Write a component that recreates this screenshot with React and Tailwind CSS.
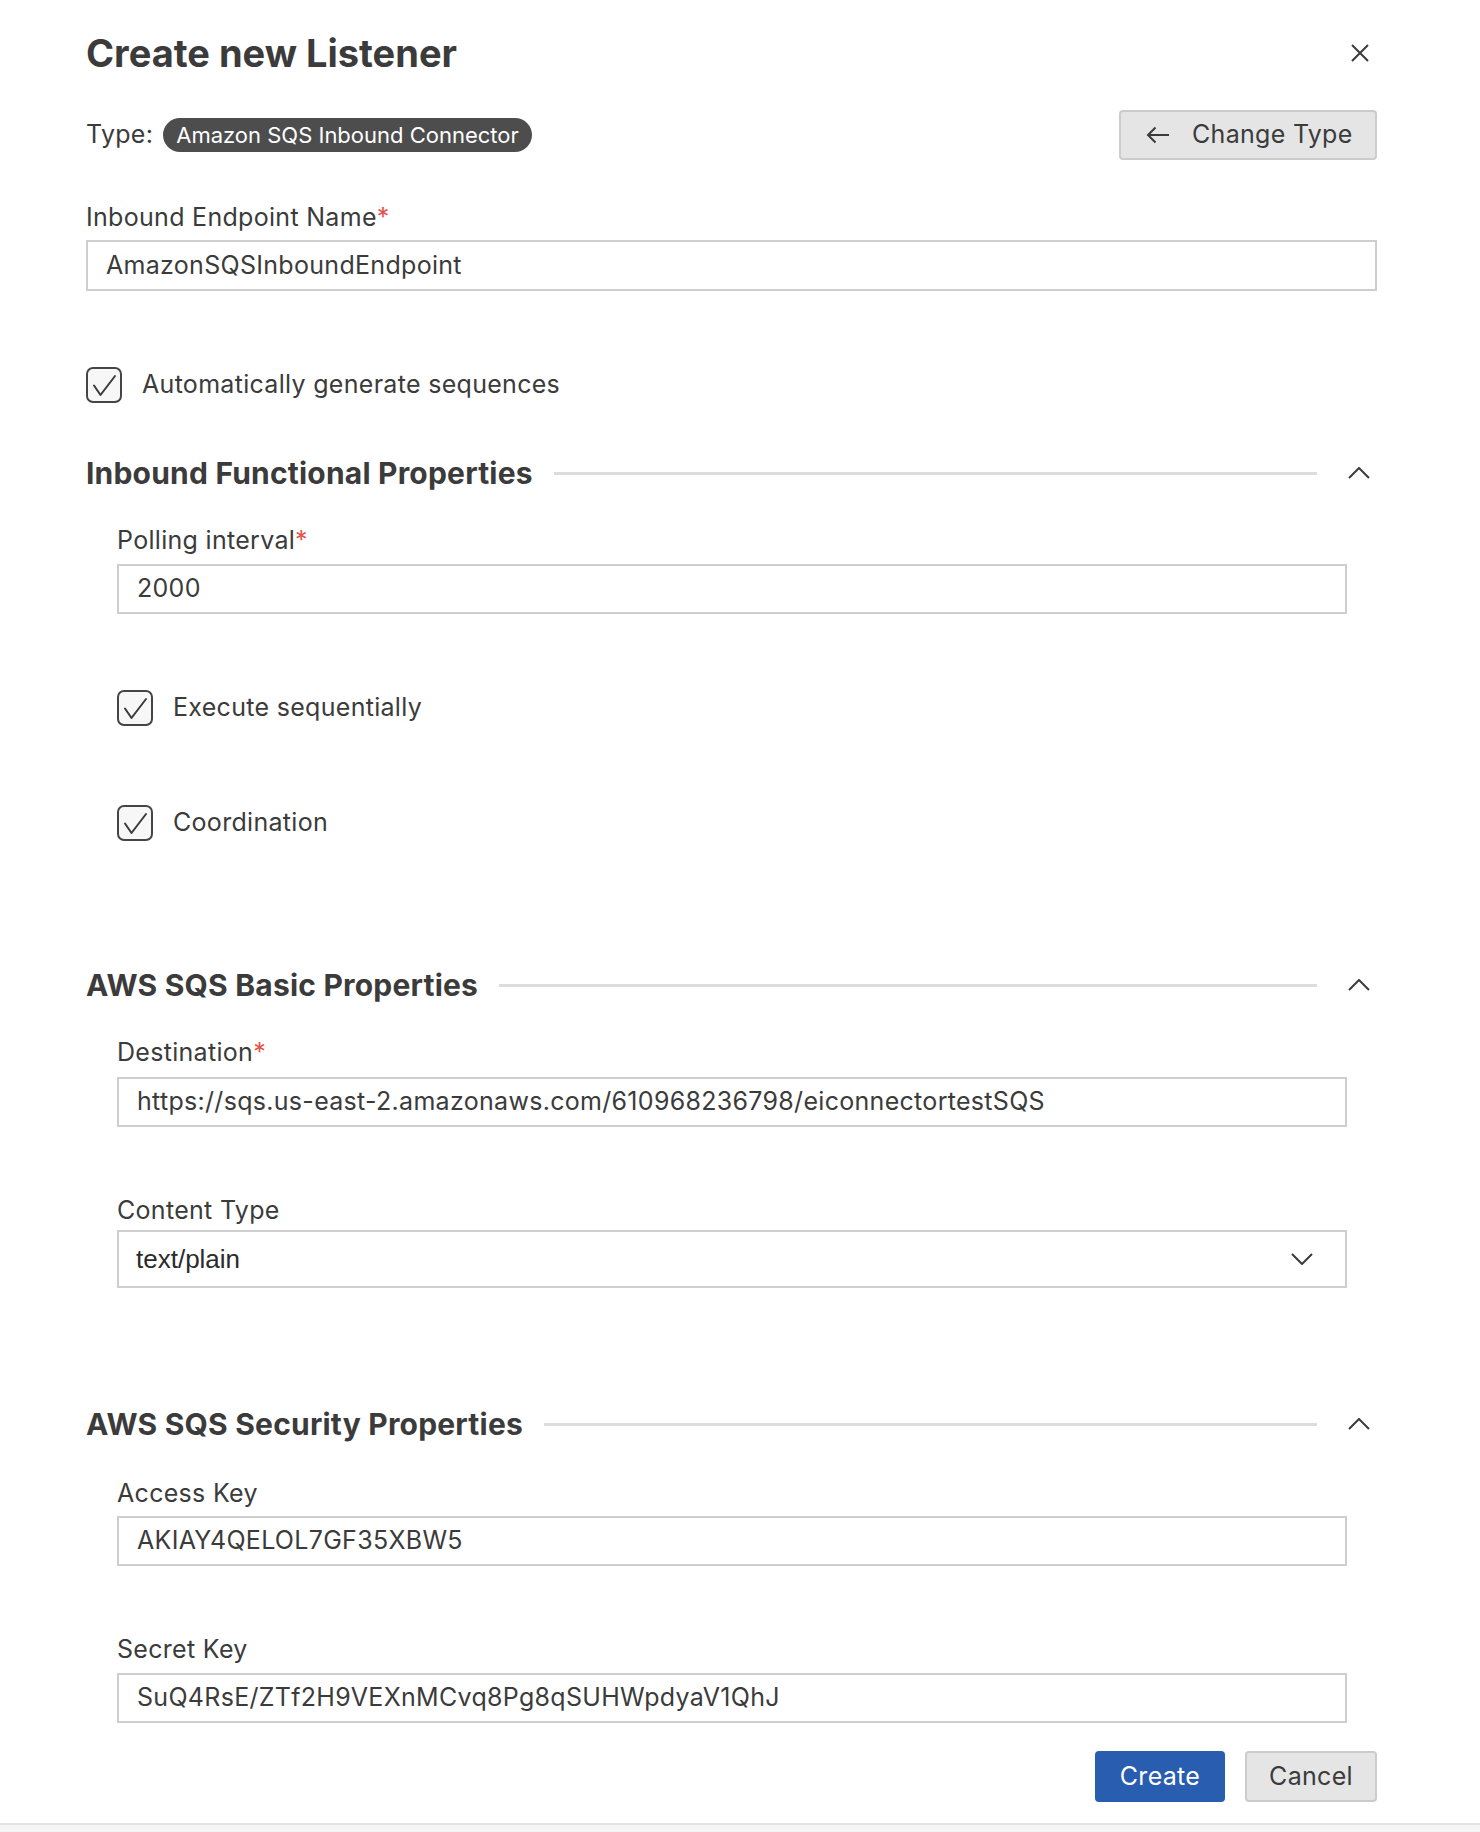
import React from "react";

function CheckIcon() {
  return (
    <svg width="36" height="36" viewBox="0 0 36 36" fill="none">
      <rect x="1" y="1" width="34" height="34" rx="6" fill="#f7f7f7" stroke="#454545" strokeWidth="2" />
      <path d="M8 18.5 L14.5 28 L29 9" stroke="#3b3b3b" strokeWidth="2" strokeLinecap="round" strokeLinejoin="round" />
    </svg>
  );
}

function ChevronUp() {
  return (
    <svg width="22" height="12" viewBox="0 0 22 12" fill="none">
      <path d="M1 11 L11 1 L21 11" stroke="#3b3b3b" strokeWidth="2" />
    </svg>
  );
}

function Label({ text, required, className = "" }) {
  return (
    <div className={`text-[25px] tracking-[0.3px] leading-[30px] text-[#3b3b3b] ${className}`}>
      {text}
      {required && <span className="text-[#e5534b]">*</span>}
    </div>
  );
}

function Field({ value, className = "" }) {
  return (
    <div className={`h-[50px] border-2 border-[#cecece] bg-white pl-[18px] flex items-center text-[25px] tracking-[0.3px] text-[#3b3b3b] ${className}`}>
      {value}
    </div>
  );
}

function Checkbox({ label, className = "" }) {
  return (
    <div className={`flex items-center gap-[20px] h-[36px] ${className}`}>
      <CheckIcon />
      <span className="text-[25px] tracking-[0.3px] text-[#3b3b3b]">{label}</span>
    </div>
  );
}

function SectionHeader({ title, className = "" }) {
  return (
    <div className={`flex items-center h-[34px] ${className}`}>
      <h2 className="text-[30px] tracking-[0.2px] font-bold text-[#3b3b3b] whitespace-nowrap">{title}</h2>
      <div className="flex-1 h-[3px] bg-[#dcdcdc] ml-[21px] mr-[24px]" />
      <div className="w-[36px] flex justify-center">
        <ChevronUp />
      </div>
    </div>
  );
}

export default function App() {
  return (
    <div className="min-h-[1832px] flex flex-col bg-white font-['Inter','Noto_Sans',sans-serif]">
      <div className="flex-1 pl-[86px] pr-[103px] pt-[31px]">
        {/* Header */}
        <div className="flex items-center justify-between h-[44px]">
          <h1 className="text-[38px] leading-[44px] font-bold text-[#3b3b3b]">Create new Listener</h1>
          <svg width="18" height="18" viewBox="0 0 18 18" className="mr-[8px]">
            <path d="M1 1 L17 17 M17 1 L1 17" stroke="#3b3b3b" strokeWidth="2" />
          </svg>
        </div>

        {/* Type row */}
        <div className="flex items-center justify-between mt-[35px] h-[50px]">
          <div className="flex items-center gap-[10px]">
            <span className="text-[25px] tracking-[0.3px] text-[#3b3b3b]">Type:</span>
            <span className="h-[34px] px-[13px] rounded-full bg-[#4d4d4d] text-white text-[22px] flex items-center">
              Amazon SQS Inbound Connector
            </span>
          </div>
          <button className="w-[258px] h-[50px] bg-[#e5e5e5] border-2 border-[#cccccc] rounded-[4px] flex items-center pl-[25px] gap-[22px] text-[25px] tracking-[0.3px] text-[#3b3b3b]">
            <svg width="24" height="18" viewBox="0 0 24 18" fill="none">
              <path d="M23 9 H2 M9.5 1.5 L2 9 L9.5 16.5" stroke="#3b3b3b" strokeWidth="2" />
            </svg>
            Change Type
          </button>
        </div>

        <Label text="Inbound Endpoint Name" required className="mt-[42px]" />
        <Field value="AmazonSQSInboundEndpoint" className="mt-[8px] h-[51px]" />

        <Checkbox label="Automatically generate sequences" className="mt-[76px]" />

        {/* Inbound Functional Properties */}
        <SectionHeader title="Inbound Functional Properties" className="mt-[53px]" />
        <div className="pl-[31px] pr-[30px]">
          <Label text="Polling interval" required className="mt-[35px]" />
          <Field value="2000" className="mt-[9px]" />
          <Checkbox label="Execute sequentially" className="mt-[76px]" />
          <Checkbox label="Coordination" className="mt-[79px]" />
        </div>

        {/* AWS SQS Basic Properties */}
        <SectionHeader title="AWS SQS Basic Properties" className="mt-[127px]" />
        <div className="pl-[31px] pr-[30px]">
          <Label text="Destination" required className="mt-[35px]" />
          <Field value="https://sqs.us-east-2.amazonaws.com/610968236798/eiconnectortestSQS" className="mt-[10px]" />
          <Label text="Content Type" className="mt-[68px]" />
          <div className="mt-[5px] h-[58px] border-2 border-[#cecece] bg-white pl-[17px] pr-[32px] flex items-center justify-between">
            <span className="text-[26px] text-[#2b2b2b] font-['Liberation_Sans',Arial,sans-serif]">text/plain</span>
            <svg width="22" height="12" viewBox="0 0 22 12" fill="none">
              <path d="M1 1 L11 11 L21 1" stroke="#3b3b3b" strokeWidth="2" />
            </svg>
          </div>
        </div>

        {/* AWS SQS Security Properties */}
        <SectionHeader title="AWS SQS Security Properties" className="mt-[119px]" />
        <div className="pl-[31px] pr-[30px]">
          <Label text="Access Key" className="mt-[37px]" />
          <Field value="AKIAY4QELOL7GF35XBW5" className="mt-[8px]" />
          <Label text="Secret Key" className="mt-[68px]" />
          <Field value="SuQ4RsE/ZTf2H9VEXnMCvq8Pg8qSUHWpdyaV1QhJ" className="mt-[9px]" />
        </div>

        {/* Actions */}
        <div className="flex justify-end gap-[20px] mt-[28px]">
          <button className="w-[130px] h-[51px] bg-[#285db0] rounded-[4px] text-white text-[25px] tracking-[0.3px]">Create</button>
          <button className="w-[132px] h-[51px] bg-[#e5e5e5] border-2 border-[#cccccc] rounded-[4px] text-[#3b3b3b] text-[25px] tracking-[0.3px]">Cancel</button>
        </div>
      </div>
      <div className="h-[10px] mt-[21px] border-t-2 border-[#e3e3e3] bg-[#f5f5f5]" />
    </div>
  );
}
